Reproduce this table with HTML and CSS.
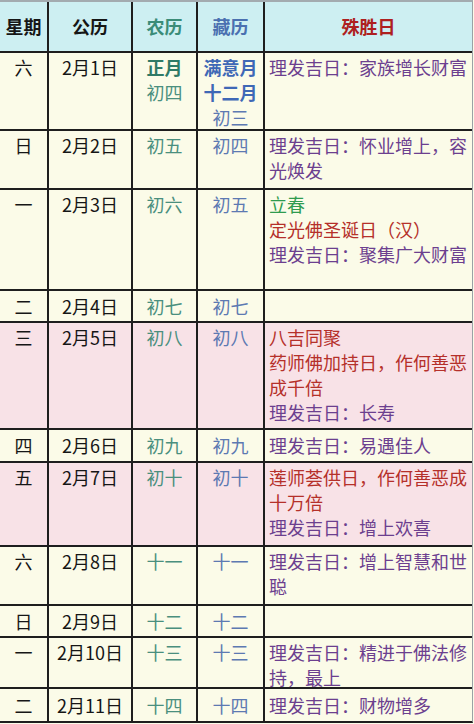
FILE: index.html
```html
<!DOCTYPE html>
<html lang="zh-CN">
<head>
<meta charset="utf-8">
<link rel="stylesheet" href="styles.css">
</head>
<body>
<div class="cal">
  <div class="row head">
    <div class="h-week">星期</div>
    <div class="h-date">公历</div>
    <div class="h-lunar">农历</div>
    <div class="h-tib">藏历</div>
    <div class="h-note">殊胜日</div>
  </div>
  <div class="row cream r76">
    <div class="wk">六</div><div class="dt">2月1日</div>
    <div class="ln"><b>正月</b><br>初四</div>
    <div class="tb"><b>满意月</b><br><b>十二月</b><br>初三</div>
    <div class="nt"><span class="pu">理发吉日：家族增长财富</span></div>
  </div>
  <div class="row cream r57">
    <div class="wk">日</div><div class="dt">2月2日</div>
    <div class="ln">初五</div><div class="tb">初四</div>
    <div class="nt"><span class="pu">理发吉日：怀业增上，容光焕发</span></div>
  </div>
  <div class="row cream r99">
    <div class="wk">一</div><div class="dt">2月3日</div>
    <div class="ln">初六</div><div class="tb">初五</div>
    <div class="nt"><span class="gr">立春</span><br><span class="rd">定光佛圣诞日（汉）</span><br><span class="pu">理发吉日：聚集广大财富</span></div>
  </div>
  <div class="row cream r30 single">
    <div class="wk">二</div><div class="dt">2月4日</div>
    <div class="ln">初七</div><div class="tb">初七</div>
    <div class="nt"></div>
  </div>
  <div class="row pink r105">
    <div class="wk">三</div><div class="dt">2月5日</div>
    <div class="ln">初八</div><div class="tb">初八</div>
    <div class="nt"><span class="rd">八吉同聚</span><br><span class="rd">药师佛加持日，作何善恶成千倍</span><br><span class="pu">理发吉日：长寿</span></div>
  </div>
  <div class="row cream r31 single">
    <div class="wk">四</div><div class="dt">2月6日</div>
    <div class="ln">初九</div><div class="tb">初九</div>
    <div class="nt"><span class="pu">理发吉日：易遇佳人</span></div>
  </div>
  <div class="row pink r82">
    <div class="wk">五</div><div class="dt">2月7日</div>
    <div class="ln">初十</div><div class="tb">初十</div>
    <div class="nt"><span class="rd">莲师荟供日，作何善恶成十万倍</span><br><span class="pu">理发吉日：增上欢喜</span></div>
  </div>
  <div class="row cream r57">
    <div class="wk">六</div><div class="dt">2月8日</div>
    <div class="ln">十一</div><div class="tb">十一</div>
    <div class="nt"><span class="pu">理发吉日：增上智慧和世聪</span></div>
  </div>
  <div class="row cream r30 single">
    <div class="wk">日</div><div class="dt">2月9日</div>
    <div class="ln">十二</div><div class="tb">十二</div>
    <div class="nt"></div>
  </div>
  <div class="row cream r49">
    <div class="wk">一</div><div class="dt">2月10日</div>
    <div class="ln">十三</div><div class="tb">十三</div>
    <div class="nt"><span class="pu">理发吉日：精进于佛法修持，最上</span></div>
  </div>
  <div class="row cream r32 single">
    <div class="wk">二</div><div class="dt">2月11日</div>
    <div class="ln">十四</div><div class="tb">十四</div>
    <div class="nt"><span class="pu">理发吉日：财物增多</span></div>
  </div>
</div>
</body>
</html>
```
FILE: styles.css
```css
html, body {
  margin: 0;
  padding: 0;
  background: #fbfbe8;
  overflow: hidden;
}

body {
  font-family: "Noto Sans CJK SC", "Noto Sans", sans-serif;
  font-size: 18px;
  line-height: 25px;
  color: #161616;
}

.cal {
  width: 472px;
  display: flex;
  flex-direction: column;
  gap: 2px;
  background: #1e1e1e;
  border-top: 2px solid #a3abb0;
  border-bottom: 2px solid #1e1e1e;
  border-right: 1px solid #9aa2a6;
}

.row {
  display: grid;
  grid-template-columns: 47px 82px 63px 65px 207px;
  grid-template-rows: minmax(0, 1fr);
  column-gap: 2px;
  align-items: stretch;
  flex: none;
}

.row > div {
  padding-top: 2px;
  text-align: center;
  min-height: 0;
}

.row.single > div {
  padding-top: 0;
  display: flex;
  align-items: center;
  justify-content: center;
}

.row.single > div.nt {
  justify-content: flex-start;
}

.head {
  height: 49px;
}

.head > div {
  background: #cdeff2;
  font-weight: 700;
  padding-top: 0;
  display: flex;
  align-items: center;
  justify-content: center;
}

.h-week, .h-date { color: #161616; }
.h-lunar { color: #3a8c78; }
.h-tib { color: #4a70b0; }
.h-note { color: #ae2020; }

.cream > div { background: #fbfbe8; }
.pink > div { background: #f8e2e7; }

.r76 { height: 76px; }
.r57 { height: 57px; }
.r99 { height: 99px; }
.r30 { height: 30px; }
.r105 { height: 105px; }
.r31 { height: 31px; }
.r82 { height: 82px; }
.r49 { height: 49px; }
.r32 { height: 32px; }

.wk, .dt { color: #161616; }

.ln { color: #4a8f7e; }
.ln b { color: #2f7a66; font-weight: 700; }

.tb { color: #5d79b2; }
.tb b { color: #3f68b6; font-weight: 700; }

.row > div.nt {
  text-align: left;
  padding-left: 4px;
  padding-right: 1px;
}

.pu { color: #6c3f8f; }
.rd { color: #b5302a; }
.gr { color: #2f9b4f; }
```
